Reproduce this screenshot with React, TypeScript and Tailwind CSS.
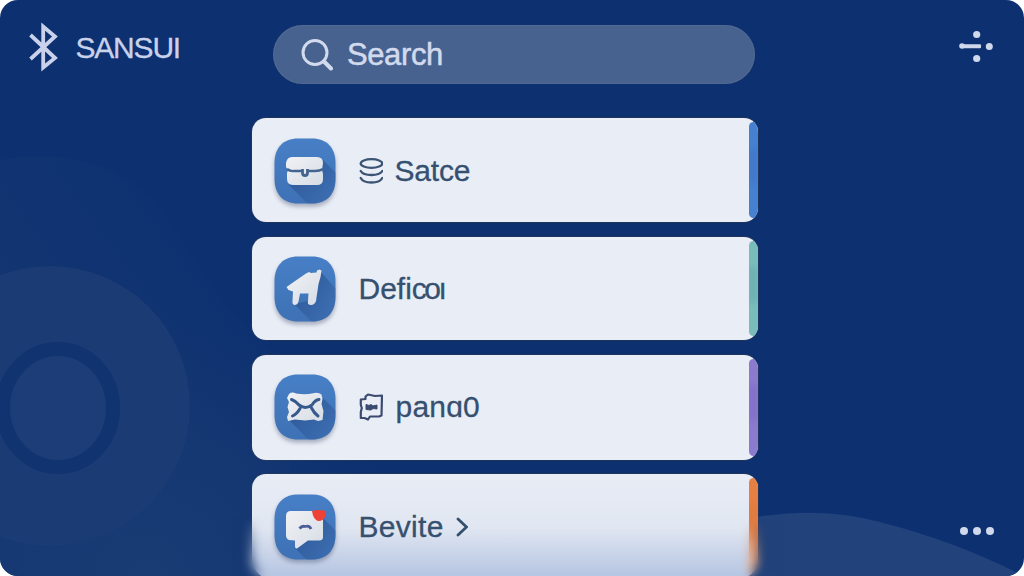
import type { ReactNode } from "react";
import cx from "clsx";

interface MenuItem {
  label: ReactNode;
  tile: ReactNode;
  mark?: ReactNode;
  chevron?: boolean;
  card: string;
  padding: string;
  edge: string;
  edgeDark: string;
}

// rounded blue tile with the long diagonal shadow behind the glyph
function Tile({ id, shadow, children }: { id: string; shadow: string; children: ReactNode }) {
  return (
    <svg
      className="h-[66px] w-[62px] shrink-0 overflow-visible drop-shadow-[0_3px_2px_rgba(60,70,100,0.4)]"
      viewBox="0 0 62 66"
    >
      <defs>
        <linearGradient id={`bg-${id}`} x1="0" y1="0" x2="0" y2="1">
          <stop offset="0" stopColor="#477fc6" />
          <stop offset="1" stopColor="#3e71b5" />
        </linearGradient>
        <linearGradient id={`fg-${id}`} x1="0" y1="0" x2="1" y2="1">
          <stop offset="0" stopColor="#f0f1f4" />
          <stop offset="1" stopColor="#d7dde6" />
        </linearGradient>
        <linearGradient id={`sh-${id}`} x1="0" y1="0" x2="1" y2="1">
          <stop offset="0.3" stopColor="#2d5796" stopOpacity="0.8" />
          <stop offset="1" stopColor="#2d5796" stopOpacity="0.05" />
        </linearGradient>
        <clipPath id={`clip-${id}`}>
          <path d="M24 0.500H38C53 0.500 61.500 10 61.500 25V41C61.500 56 53 65.500 38 65.500H24C9 65.500 0.500 56 0.500 41V25C0.500 10 9 0.500 24 0.500Z" />
        </clipPath>
      </defs>
      <g clipPath={`url(#clip-${id})`}>
        <rect width="62" height="66" fill={`url(#bg-${id})`} />
        <path d={shadow} fill={`url(#sh-${id})`} />
      </g>
      <g fill={`url(#fg-${id})`}>{children}</g>
    </svg>
  );
}

function BriefcaseTile() {
  return (
    <Tile id="case" shadow="M49 22L62 35V66H34L15 47Z">
      <path d="M18 19H43Q49 19 49 25L48 32L49 36V41Q49 47 43 47H20Q13 47 13 41V35L14 32L12 29V25Q13 19 18 19Z" />
      <path
        d="M13 31Q16 33.500 20 33H28M34 33H41Q46 33 49 31"
        fill="none"
        stroke="#44658f"
        strokeWidth="2.400"
      />
      <path
        d="M28.500 31V35Q28.500 37.500 31 37.500Q33.500 37.500 33.500 35V31"
        fill="none"
        stroke="#44658f"
        strokeWidth="2.800"
      />
    </Tile>
  );
}

function HomeTile() {
  return (
    <Tile id="home" shadow="M46 15L62 33V66H38L20 48L38 44Z">
      <path d="M45.500 13.500L47.500 14.500L46.500 21L44.500 28L42 45Q40.500 49 37 49Q33 49 34 45L34.500 37.500H26L24.500 45.500Q23.500 49 20.500 49Q18 48.500 18.500 45L19 35.500L14.500 34L12.500 31L24 23L32 17.500L35 16L37 17L42.500 16.500L43 14.500Z" />
    </Tile>
  );
}

function MailTile() {
  return (
    <Tile id="mail" shadow="M49 24L62 37V66H35L15 46Z">
      <path d="M15 20Q18 17.500 22 19.500Q31 21 38 19.500Q44 17.500 47.500 20.500L48.500 25L47.500 30L49.500 37L48.500 46L44 47L40 45.500L31 46.500L21 45.500L14 47L13 43L15 38L13.500 33L15 28L13 24Z" />
      <path
        d="M17.500 25.500Q22 27 25 31Q31 36 38 31Q41 26 45 25.500M18.500 42Q23 40 26 34.500M44 42Q40 39 37.500 34"
        fill="none"
        stroke="#36598d"
        strokeWidth="3"
        strokeLinecap="round"
      />
    </Tile>
  );
}

function ChatTile() {
  return (
    <Tile id="chat" shadow="M49 24L62 37V66H33L21 54L32 46Z">
      <path d="M17 17H44Q49 18 49 23V43Q49 46.500 45 46.500H34L23 54.500Q21 55 21 52V46.500L15 46Q12 45 12 41V22Q12 17 17 17Z" />
      <path
        d="M25.500 34.500Q28 31.500 31 32.500Q35.500 31 37 35"
        fill="none"
        stroke="#4c5c98"
        strokeWidth="2.800"
      />
      <path d="M38 17Q43 15.500 50 16.500Q53 18 51.500 22Q49 27.500 44 27Q39 25 38 17Z" fill="#ee4236" />
    </Tile>
  );
}

function StackMark() {
  return (
    <svg
      className="mr-[12px] h-[26px] w-6 shrink-0"
      viewBox="0 0 24 26"
      fill="none"
      stroke="#3c5473"
      strokeWidth="2.300"
      strokeLinecap="round"
    >
      <ellipse cx="12.500" cy="5.500" rx="10.800" ry="4.300" />
      <path d="M1.700 13Q4 17 12.500 17Q21 17 23.300 13M1.700 20Q4 24.500 12.500 24.500Q21 24.500 23.300 20" />
    </svg>
  );
}

function PageMark() {
  return (
    <svg
      className="mr-[13px] h-[28px] w-6 shrink-0"
      viewBox="0 0 24 28"
      fill="none"
      stroke="#3a4a70"
      strokeWidth="2.200"
      strokeLinejoin="round"
    >
      <path d="M6.500 3.500L9 1.500L16 3L23 2.500L22.500 22.500L20 23.500L11 23.500L9 26.500L5.500 25L1.800 25V19L2.800 15L1.800 12V6.500L6.500 6Z" />
      <path
        d="M7 11.500L10 12.500L12 11.500L14 13L18 12V16L14 15.500L12 17L7 16.500Z"
        fill="#3a4a70"
        strokeWidth="1"
      />
    </svg>
  );
}

const items: MenuItem[] = [
  {
    label: <span className="tracking-[-0.2px]">Satce</span>,
    tile: <BriefcaseTile />,
    mark: <StackMark />,
    card: "h-[104px] rounded-[14px] bg-[#e9edf6]",
    padding: "pt-[20px]",
    edge: "bg-[#4681d1]",
    edgeDark: "bg-[#3d73c4]",
  },
  {
    label: (
      <span>
        Defi<span className="tracking-[-2.500px]">co</span>ı
      </span>
    ),
    tile: <HomeTile />,
    card: "h-[103.500px] rounded-[14px] bg-[#e9edf6]",
    padding: "pt-[19.500px]",
    edge: "bg-[#79bdbb]",
    edgeDark: "bg-[#62a9af]",
  },
  {
    label: <span className="tracking-[0.2px]">panɑ0</span>,
    tile: <MailTile />,
    mark: <PageMark />,
    card: "h-[105px] rounded-[14px] bg-[#e9edf6]",
    padding: "pt-[19.500px]",
    edge: "bg-[#8b7bcf]",
    edgeDark: "bg-[#7b6bc2]",
  },
  {
    label: <span className="tracking-[0.3px]">Bevite</span>,
    tile: <ChatTile />,
    chevron: true,
    card: "h-[106px] rounded-t-[14px] rounded-b-[22px] bg-linear-to-b from-[#e8ecf5] via-[#e1e7f2] via-50% to-[#b2c2e0]",
    padding: "pt-[20px]",
    edge: "bg-linear-to-b from-[#e67f42] from-50% to-[#e2b193]",
    edgeDark: "bg-[#d97842]",
  },
];

function MenuCard({ item }: { item: MenuItem }) {
  return (
    <li
      className={cx(
        "flex shrink-0 overflow-hidden shadow-[0_0_1px_1px_rgba(50,60,85,0.55)]",
        item.card,
      )}
    >
      <div className={cx("flex flex-1 items-start pl-[22px]", item.padding)}>
        {item.tile}
        <div className="ml-[22.500px] flex h-[65px] items-center text-[30px] leading-none text-[#36506f] [-webkit-text-stroke:0.3px_#36506f]">
          {item.mark}
          {item.label}
          {item.chevron && (
            <svg
              className="ml-[12px] h-5 w-3"
              viewBox="0 0 12 20"
              fill="none"
              stroke="#34506f"
              strokeWidth="2.800"
              strokeLinecap="round"
            >
              <path d="M2 2L10.500 10L2 18" />
            </svg>
          )}
        </div>
      </div>
      <div className={cx("my-[4px] flex w-[9px] flex-col overflow-hidden rounded-[5px]", item.edge)}>
        <div className={cx("mt-[26px] h-9 w-full opacity-60 blur-[3px]", item.edgeDark)} />
      </div>
    </li>
  );
}

function Backdrop() {
  return (
    <svg className="absolute inset-0 h-full w-full" viewBox="0 0 1024 576">
      <defs>
        <linearGradient id="halo" gradientUnits="userSpaceOnUse" x1="0" y1="400" x2="230" y2="230">
          <stop offset="0" stopColor="#1a3a73" stopOpacity="0.65" />
          <stop offset="1" stopColor="#1a3a73" stopOpacity="0.05" />
        </linearGradient>
        <radialGradient id="floor" gradientUnits="userSpaceOnUse" cx="150" cy="576" r="260">
          <stop offset="0" stopColor="#1a3c74" stopOpacity="0.9" />
          <stop offset="1" stopColor="#1a3c74" stopOpacity="0" />
        </radialGradient>
      </defs>
      <path d="M0 160Q100 145 155 200C200 260 220 320 290 360V576H0Z" fill="url(#halo)" />
      <rect y="300" width="500" height="276" fill="url(#floor)" />
      <ellipse cx="50" cy="406" rx="140" ry="140" fill="#1a3b74" />
      <ellipse cx="58" cy="408" rx="55" ry="59" fill="#1c3d77" stroke="#113370" strokeWidth="14" />
      <path d="M700 530Q800 500 880 522Q955 541 1024 576H700Z" fill="#21427a" />
    </svg>
  );
}

export default function App() {
  return (
    <div className="h-[576px] w-[1024px] overflow-hidden bg-white font-['Liberation_Sans',Arial,sans-serif]">
      <main className="relative h-full overflow-hidden rounded-[18px] bg-[#0c3070]">
        <Backdrop />
        <div className="relative grid h-full grid-cols-[252px_506px_1fr] grid-rows-[576px]">
          <div className="flex items-start pt-[22px] pl-[28px] text-[#c9d2ea]">
            <svg
              className="h-[50px] w-[31px]"
              viewBox="0 0 31 50"
              fill="none"
              stroke="currentColor"
              strokeWidth="3.800"
            >
              <path d="M2.500 13L27 36L15.200 45.500V4.500L27 14.500L2.500 37" />
            </svg>
            <span className="mt-[10px] ml-[16.500px] text-[30px] leading-8 tracking-[-1.200px] [-webkit-text-stroke:0.3px_currentColor]">
              SANSUI
            </span>
          </div>

          <div className="flex flex-col pt-[25px]">
            <label className="ml-[21px] flex h-[59px] w-[482px] shrink-0 items-center rounded-full bg-[#48628f] pl-[28px] text-[#d2daed] shadow-[inset_0_0_1px_1px_rgba(115,130,155,0.25)]">
              <svg
                className="h-8 w-8"
                viewBox="0 0 32 32"
                fill="none"
                stroke="currentColor"
                strokeWidth="3"
                strokeLinecap="round"
              >
                <circle cx="14" cy="13.500" r="12" />
                <path d="M23 22.500L30 29.500" strokeWidth="4" />
              </svg>
              <span className="ml-[14px] text-[31px] leading-none tracking-[-0.4px] [-webkit-text-stroke:0.5px_currentColor]">
                Search
              </span>
            </label>
            <ul className="mt-[34px] flex flex-col gap-[14.500px]">
              {items.map((item, index) => (
                <MenuCard key={index} item={item} />
              ))}
            </ul>
          </div>

          <div className="flex flex-col items-end justify-between pt-[29px] pr-[30px] pb-[41px] text-[#d0d8ec]">
            <svg className="h-[35px] w-[37px]" viewBox="0 0 37 35" fill="currentColor">
              <circle cx="19.700" cy="5.500" r="3.600" />
              <circle cx="19.700" cy="29.500" r="3.600" />
              <circle cx="32.300" cy="17.500" r="3.500" />
              <circle cx="5" cy="17" r="2.800" />
              <rect x="5" y="15.200" width="19" height="4" rx="1" />
            </svg>
            <div className="flex gap-[5px]">
              <span className="size-2 rounded-full bg-current" />
              <span className="size-2 rounded-full bg-current" />
              <span className="size-2 rounded-full bg-current" />
            </div>
          </div>
        </div>

        {/* both sides of the last card melt into the background */}
        <div className="pointer-events-none absolute bottom-0 left-[232px] h-[60px] w-[38px] backdrop-blur-[6px] mask-[linear-gradient(to_bottom,transparent,black_80%)]" />
        <div className="pointer-events-none absolute bottom-0 left-[740px] h-[56px] w-[44px] backdrop-blur-[5px] mask-[linear-gradient(to_bottom,transparent,black_80%)]" />
      </main>
    </div>
  );
}
